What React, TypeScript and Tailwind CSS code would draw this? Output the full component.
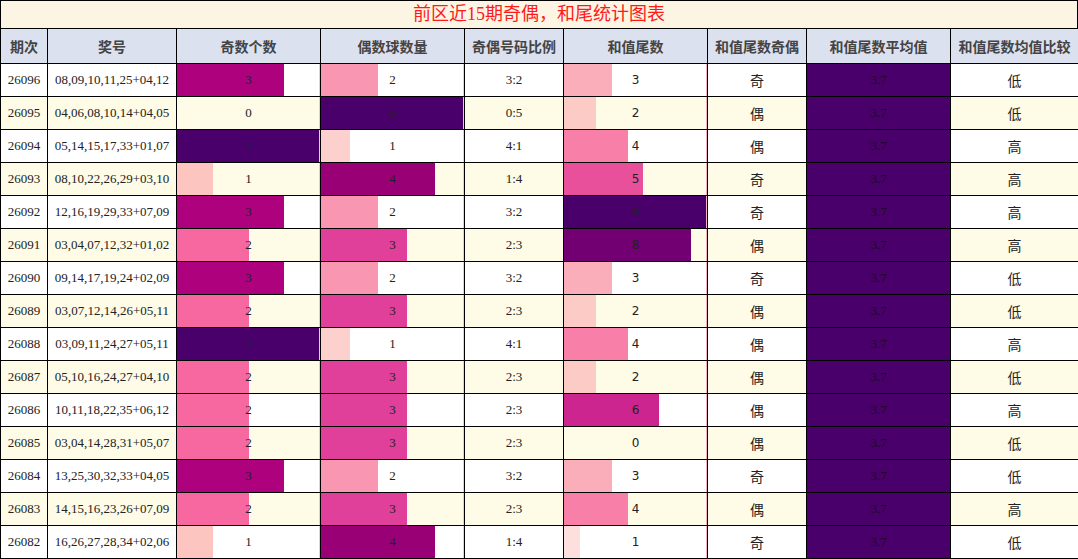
import React from "react";

type Row = {
  id: string;
  nums: string;
  odd: number;
  even: number;
  ratio: string;
  tail: number;
  tailOE: string;
  cmp: string;
};

const rows: Row[] = [
  { id: "26096", nums: "08,09,10,11,25+04,12", odd: 3, even: 2, ratio: "3:2", tail: 3, tailOE: "奇", cmp: "低" },
  { id: "26095", nums: "04,06,08,10,14+04,05", odd: 0, even: 5, ratio: "0:5", tail: 2, tailOE: "偶", cmp: "低" },
  { id: "26094", nums: "05,14,15,17,33+01,07", odd: 4, even: 1, ratio: "4:1", tail: 4, tailOE: "偶", cmp: "高" },
  { id: "26093", nums: "08,10,22,26,29+03,10", odd: 1, even: 4, ratio: "1:4", tail: 5, tailOE: "奇", cmp: "高" },
  { id: "26092", nums: "12,16,19,29,33+07,09", odd: 3, even: 2, ratio: "3:2", tail: 9, tailOE: "奇", cmp: "高" },
  { id: "26091", nums: "03,04,07,12,32+01,02", odd: 2, even: 3, ratio: "2:3", tail: 8, tailOE: "偶", cmp: "高" },
  { id: "26090", nums: "09,14,17,19,24+02,09", odd: 3, even: 2, ratio: "3:2", tail: 3, tailOE: "奇", cmp: "低" },
  { id: "26089", nums: "03,07,12,14,26+05,11", odd: 2, even: 3, ratio: "2:3", tail: 2, tailOE: "偶", cmp: "低" },
  { id: "26088", nums: "03,09,11,24,27+05,11", odd: 4, even: 1, ratio: "4:1", tail: 4, tailOE: "偶", cmp: "高" },
  { id: "26087", nums: "05,10,16,24,27+04,10", odd: 2, even: 3, ratio: "2:3", tail: 2, tailOE: "偶", cmp: "低" },
  { id: "26086", nums: "10,11,18,22,35+06,12", odd: 2, even: 3, ratio: "2:3", tail: 6, tailOE: "偶", cmp: "高" },
  { id: "26085", nums: "03,04,14,28,31+05,07", odd: 2, even: 3, ratio: "2:3", tail: 0, tailOE: "偶", cmp: "低" },
  { id: "26084", nums: "13,25,30,32,33+04,05", odd: 3, even: 2, ratio: "3:2", tail: 3, tailOE: "奇", cmp: "低" },
  { id: "26083", nums: "14,15,16,23,26+07,09", odd: 2, even: 3, ratio: "2:3", tail: 4, tailOE: "偶", cmp: "高" },
  { id: "26082", nums: "16,26,27,28,34+02,06", odd: 1, even: 4, ratio: "1:4", tail: 1, tailOE: "奇", cmp: "低" },
];

const oddColors = ["transparent", "#fcc5c0", "#f768a1", "#ae017e", "#49006a"];
const evenColors = ["transparent", "#fcd0cc", "#f996b2", "#e03f9a", "#9a0075", "#49006a"];
const tailColors = ["transparent", "#fde0dd", "#fccbc6", "#f9aeb9", "#f880a8", "#e8509b", "#cc2590", "#a0017c", "#730073", "#49006a"];

const serif = "font-['Liberation_Serif','Noto_Sans_CJK_SC',serif]";
const cjk = "font-['Noto_Sans_CJK_SC',sans-serif]";

function BarCell({ value, max, colors, edge, sans }: { value: number; max: number; colors: string[]; edge: string; sans?: boolean }) {
  return (
    <td className="border border-black p-0">
      <div className="relative h-[32px] flex items-center justify-center">
        <div
          className="absolute left-0 top-0 bottom-0"
          style={{ width: `${(value / max) * 100}%`, backgroundColor: colors[value] }}
        />
        <div className="absolute right-0 top-0 bottom-0 w-px" style={{ backgroundColor: edge }} />
        <span
          className={
            sans
              ? "relative text-[12px] text-[#222] font-['DejaVu_Sans',sans-serif]"
              : `relative text-[13px] text-[#222] ${serif}`
          }
        >
          {value}
        </span>
      </div>
    </td>
  );
}

export default function App() {
  const headers = ["期次", "奖号", "奇数个数", "偶数球数量", "奇偶号码比例", "和值尾数", "和值尾数奇偶", "和值尾数平均值", "和值尾数均值比较"];
  const widths = [47, 129, 144, 144, 99, 144, 99, 144, 128];

  return (
    <div className="w-[1078px] h-[559px] bg-white overflow-hidden">
      <div className={`h-[28px] border-t border-x border-black bg-[#fdf5e4] flex items-center justify-center text-[18px] text-[#ff1a1a] ${serif}`}>
        前区近15期奇偶，和尾统计图表
      </div>
      <table className="w-[1078px] table-fixed border-collapse">
        <colgroup>
          {widths.map((w, i) => (
            <col key={i} style={{ width: w }} />
          ))}
        </colgroup>
        <thead>
          <tr className="bg-[#dce1f0]">
            {headers.map((h) => (
              <th key={h} className={`border border-black h-[35px] p-0 text-[14px] font-bold text-[#444] ${cjk}`}>
                {h}
              </th>
            ))}
          </tr>
        </thead>
        <tbody>
          {rows.map((r, i) => (
            <tr key={r.id} className={i % 2 === 0 ? "bg-white" : "bg-[#fefbe6]"}>
              <td className={`border border-black p-0 h-[33px] text-center text-[13px] text-[#222] ${serif}`}>{r.id}</td>
              <td className={`border border-black p-0 text-center text-[13px] text-[#222] ${serif}`}>{r.nums}</td>
              <BarCell value={r.odd} max={4} colors={oddColors} edge="#f4c6d6" />
              <BarCell value={r.even} max={5} colors={evenColors} edge="#f4c6d6" />
              <td className={`border border-black p-0 text-center text-[13px] text-[#222] ${serif}`}>{r.ratio}</td>
              <BarCell value={r.tail} max={9} colors={tailColors} edge="#f7b0c4" sans />
              <td className={`border border-black p-0 text-center text-[14px] text-[#222] ${cjk}`}>{r.tailOE}</td>
              <td className={`border border-black p-0 text-center bg-[#49006a] text-[13px] text-[#1a0a22] ${serif}`}>3.7</td>
              <td className={`border border-black p-0 text-center text-[14px] text-[#222] ${cjk}`}>{r.cmp}</td>
            </tr>
          ))}
        </tbody>
      </table>
    </div>
  );
}
